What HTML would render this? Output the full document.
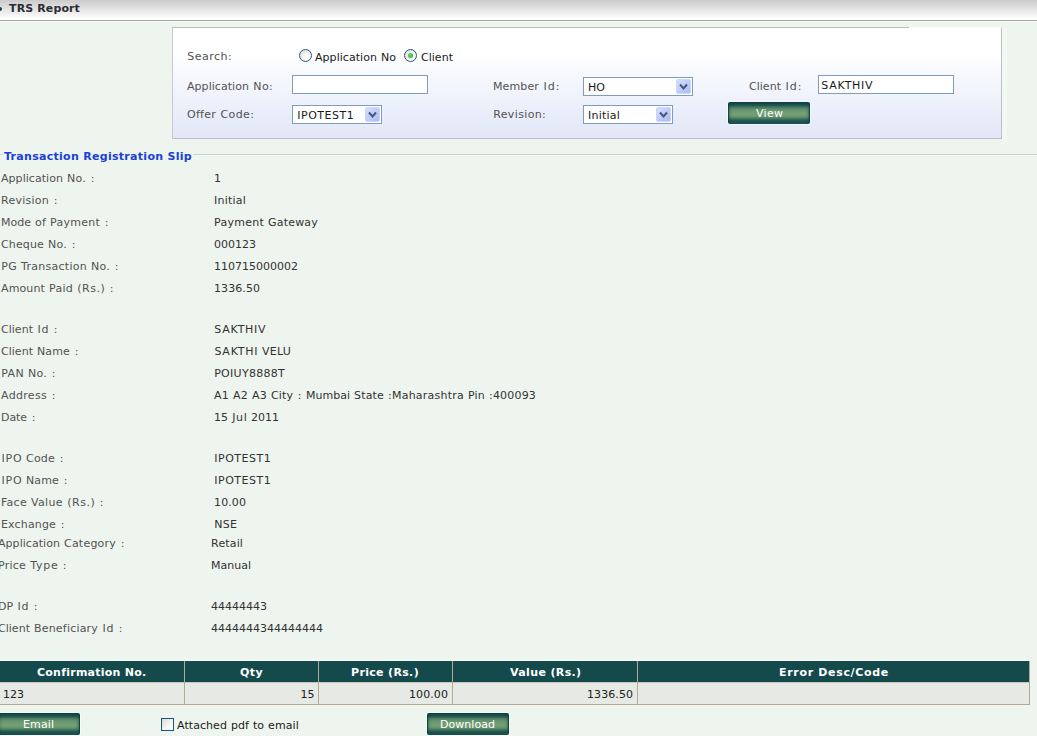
<!DOCTYPE html>
<html>
<head>
<meta charset="utf-8">
<title>TRS Report</title>
<style>
html,body{margin:0;padding:0;}
body{width:1037px;height:736px;overflow:hidden;background:#eef5ee;font-family:"DejaVu Sans","Liberation Sans",sans-serif;font-size:11px;color:#444;position:relative;}
.abs{position:absolute;white-space:pre;line-height:14px;}
.box{position:absolute;box-sizing:border-box;}
#hdr{left:0;top:0;width:1037px;height:20px;background:linear-gradient(#cbcbcb 0,#e6e6e6 50%,#fff 95%);}
#hline{left:0;top:20px;width:1037px;height:2px;background:linear-gradient(#9fa59f 0,#9fa59f 50%,#f7fbf7 50%,#f7fbf7 100%);}
#dot{left:-3px;top:7px;width:5px;height:4px;border-radius:2px;background:#0d4a46;}
.hd{font-weight:bold;color:#2c2c36;}
#panel{left:172px;top:27px;width:830px;height:112px;border:1px solid #bcc1c8;border-left-color:#c6cad2;border-top-color:#fff;background:linear-gradient(#fff 0,#fff 22%,#f1f4fc 58%,#e1e7f8 100%);}
#ptop{left:172px;top:27px;width:737px;height:1px;background:#b9bdb9;}
#pstrip{left:1002px;top:28px;width:5px;height:114px;background:#f2f8f2;}
.lbl{color:#525252;}
.r{color:#525252;}
.v{color:#323232;}
.iv{color:#1a1a1a;}
.inp{border:1px solid #7f9db9;background:#fff;height:19px;}
.sel{border:1px solid #7f9db9;background:#fff;height:19px;}
.sel i{position:absolute;right:1px;top:1px;width:15px;height:15px;border-radius:2px;background:linear-gradient(135deg,#d6e0fb 0,#bccbf7 55%,#aabdf3 100%);border:1px solid #cad6fb;box-sizing:border-box;}
.sel i svg{position:absolute;left:2px;top:3px;}
.radio{width:13px;height:13px;border:1px solid #27568f;border-radius:50%;background:radial-gradient(circle at 62% 62%,#fff 0,#f6f6f2 35%,#d4d4cc 100%);}
.radio.on:after{content:"";position:absolute;left:3px;top:3px;width:5px;height:5px;border-radius:50%;background:radial-gradient(circle at 40% 40%,#6be06b 0,#22a322 90%);}
.btn{height:22px;border-radius:2px;box-shadow:0 0 0 1px rgba(255,255,255,.5);
 background:linear-gradient(90deg,rgba(12,60,60,.9) 0,rgba(12,60,60,.9) 1px,rgba(12,60,60,.22) 1.6px,rgba(12,60,60,.1) 3px,rgba(12,60,60,0) 5px,rgba(12,60,60,0) calc(100% - 5px),rgba(12,60,60,.1) calc(100% - 3px),rgba(12,60,60,.22) calc(100% - 1.6px),rgba(12,60,60,.9) calc(100% - 1px),rgba(12,60,60,.9) 100%),linear-gradient(#0e4040 0,#0e4040 2.3%,#154a48 6.8%,#1c504c 11.4%,#245850 15.9%,#3a6a5a 20.5%,#4a7a62 25%,#588868 29.5%,#62906c 34%,#6a9670 38.6%,#6e9a72 45%,#74a076 54.5%,#709c72 61%,#66946c 66%,#588868 70.5%,#487a60 75%,#346858 79.5%,#245a50 84%,#1e5450 88.6%,#1c524e 93%,#1a4e4c 97.7%);}
.bt{color:#fff;}
#line{left:0;top:154px;width:1037px;height:2px;background:linear-gradient(#d0d1c4 0,#d0d1c4 50%,#f5f9f5 50%,#f5f9f5 100%);}
#legbg{left:3px;top:150px;width:190px;height:10px;background:#eef5ee;}
.leg{font-weight:bold;color:#1a40d8;}
#thl{left:0;top:660px;width:1030px;height:1px;background:#fafcfa;}
#thead{left:0;top:661px;width:1029px;height:21px;background:#144a4c;}
#tmid{left:0;top:682px;width:1029px;height:1px;background:#c9c6ba;}
#trow{left:0;top:683px;width:1029px;height:21px;background:#e6e9e4;}
#tbot{left:0;top:704px;width:1030px;height:1px;background:#b3a994;}
.vd{top:661px;width:1px;height:44px;background:#b3a994;}
.th{font-weight:bold;color:#fff;}
.td{color:#222;}
#cb{left:161px;top:718px;width:13px;height:13px;border:1px solid #1c5180;background:linear-gradient(135deg,#d8d8d0 0,#f4f4f0 55%,#fff 100%);}
</style>
</head>
<body>
<div class="box" id="hdr"></div><div class="box" id="hline"></div><div class="box" id="dot"></div>

<div class="box" id="panel"></div>
<div class="box" id="ptop"></div>
<div class="box" id="pstrip"></div>

<div class="box radio" style="left:299px;top:49px"></div>
<div class="box radio on" style="left:404px;top:49px"></div>

<div class="box inp" style="left:292px;top:75px;width:136px"></div>
<div class="box sel" style="left:583px;top:77px;width:110px"><i><svg width="9" height="8" viewBox="0 0 9 8"><path d="M1 1.5 L4.5 5.5 L8 1.5" fill="none" stroke="#46567a" stroke-width="2"/></svg></i></div>
<div class="box inp" style="left:818px;top:75px;width:136px"></div>
<div class="box sel" style="left:292px;top:105px;width:90px"><i><svg width="9" height="8" viewBox="0 0 9 8"><path d="M1 1.5 L4.5 5.5 L8 1.5" fill="none" stroke="#46567a" stroke-width="2"/></svg></i></div>
<div class="box sel" style="left:583px;top:105px;width:90px"><i><svg width="9" height="8" viewBox="0 0 9 8"><path d="M1 1.5 L4.5 5.5 L8 1.5" fill="none" stroke="#46567a" stroke-width="2"/></svg></i></div>
<div class="box btn" style="left:728px;top:102px;width:82px"></div>

<div class="box" id="line"></div>
<div class="box" id="legbg"></div>

<div class="box" id="thl"></div>
<div class="box" id="thead"></div>
<div class="box" id="tmid"></div>
<div class="box" id="trow"></div>
<div class="box" id="tbot"></div>
<div class="box vd" style="left:184px"></div>
<div class="box vd" style="left:318px"></div>
<div class="box vd" style="left:452px"></div>
<div class="box vd" style="left:637px"></div>
<div class="box vd" style="left:1029px"></div>

<div class="box btn" style="left:-2px;top:713px;width:82px"></div>
<div class="box" id="cb"></div>
<div class="box btn" style="left:427px;top:713px;width:82px"></div>

<span class="abs hd" style="left:9px;top:2px;letter-spacing:.122px">TRS Report</span>
<span class="abs lbl" style="left:187.25px;top:50px;letter-spacing:.5px">Search:</span>
<span class="abs iv" style="left:315px;top:51px;word-spacing:.5px"><span style="letter-spacing:.048px">Application</span> <span style="letter-spacing:.016px">No</span></span>
<span class="abs iv" style="left:421.01px;top:51px;letter-spacing:.023px">Client</span>
<span class="abs lbl" style="left:187px;top:80px;word-spacing:.5px"><span style="letter-spacing:.048px">Application</span> <span style="letter-spacing:.443px;margin:0 -.221px 0 .221px">No:</span></span>
<span class="abs lbl" style="left:493px;top:80px;word-spacing:.5px"><span style="letter-spacing:.125px">Member</span> <span style="letter-spacing:1.021px;margin:0 -.51px 0 .51px">Id:</span></span>
<span class="abs lbl" style="left:749px;top:80px;word-spacing:.5px"><span style="letter-spacing:.023px">Client</span> <span style="letter-spacing:1.021px;margin:0 -.51px 0 .51px">Id:</span></span>
<span class="abs lbl" style="left:187px;top:108px;word-spacing:.5px"><span style="letter-spacing:.294px">Offer</span> <span style="letter-spacing:.425px;margin:0 -.212px 0 .212px">Code:</span></span>
<span class="abs lbl" style="left:493.18px;top:108px;letter-spacing:.368px">Revision:</span>
<span class="abs iv" style="left:588.02px;top:81px;letter-spacing:.031px">HO</span>
<span class="abs iv" style="left:821.37px;top:79px;letter-spacing:.737px">SAKTHIV</span>
<span class="abs iv" style="left:297.26px;top:109px;letter-spacing:.512px">IPOTEST1</span>
<span class="abs iv" style="left:588.11px;top:109px;letter-spacing:.221px">Initial</span>
<span class="abs leg" style="left:4px;top:150px;letter-spacing:.292px">Transaction Registration Slip</span>
<span class="abs r" style="left:1px;top:172px;word-spacing:.5px"><span style="letter-spacing:.048px">Application</span> <span style="letter-spacing:.245px">No.</span> <span style="letter-spacing:1.281px;margin:0 -.641px 0 .641px">:</span></span>
<span class="abs v" style="left:214px;top:172px;letter-spacing:0px">1</span>
<span class="abs r" style="left:1px;top:194px;word-spacing:.5px"><span style="letter-spacing:.252px">Revision</span> <span style="letter-spacing:1.281px;margin:0 -.641px 0 .641px">:</span></span>
<span class="abs v" style="left:214.11px;top:194px;letter-spacing:.221px">Initial</span>
<span class="abs r" style="left:1px;top:216px;word-spacing:.5px"><span style="letter-spacing:.004px">Mode</span> <span style="letter-spacing:.195px">of</span> <span style="letter-spacing:.261px">Payment</span> <span style="letter-spacing:1.281px;margin:0 -.641px 0 .641px">:</span></span>
<span class="abs v" style="left:214px;top:216px;word-spacing:.5px"><span style="letter-spacing:.261px">Payment</span> <span style="letter-spacing:.201px">Gateway</span></span>
<span class="abs r" style="left:1px;top:238px;word-spacing:.5px"><span style="letter-spacing:.141px">Cheque</span> <span style="letter-spacing:.245px">No.</span> <span style="letter-spacing:1.281px;margin:0 -.641px 0 .641px">:</span></span>
<span class="abs v" style="left:214px;top:238px;letter-spacing:0px">000123</span>
<span class="abs r" style="left:1px;top:260px;word-spacing:.5px"><span style="letter-spacing:.414px;margin:0 -.207px 0 .207px">PG</span> <span style="letter-spacing:.278px">Transaction</span> <span style="letter-spacing:.245px">No.</span> <span style="letter-spacing:1.281px;margin:0 -.641px 0 .641px">:</span></span>
<span class="abs v" style="left:214px;top:260px;letter-spacing:.001px">110715000002</span>
<span class="abs r" style="left:1px;top:282px;word-spacing:.5px"><span style="letter-spacing:.128px">Amount</span> <span style="letter-spacing:.27px">Paid</span> <span style="letter-spacing:.506px;margin:0 -.253px 0 .253px">(Rs.)</span> <span style="letter-spacing:1.281px;margin:0 -.641px 0 .641px">:</span></span>
<span class="abs v" style="left:214.04px;top:282px;letter-spacing:.071px">1336.50</span>
<span class="abs r" style="left:1px;top:323px;word-spacing:.5px"><span style="letter-spacing:.023px">Client</span> <span style="letter-spacing:.883px;margin:0 -.441px 0 .441px">Id</span> <span style="letter-spacing:1.281px;margin:0 -.641px 0 .641px">:</span></span>
<span class="abs v" style="left:214.37px;top:323px;letter-spacing:.737px">SAKTHIV</span>
<span class="abs r" style="left:1px;top:345px;word-spacing:.5px"><span style="letter-spacing:.023px">Client</span> <span style="letter-spacing:.137px">Name</span> <span style="letter-spacing:1.281px;margin:0 -.641px 0 .641px">:</span></span>
<span class="abs v" style="left:214px;top:345px;word-spacing:.5px"><span style="letter-spacing:.781px;margin:0 -.391px 0 .391px">SAKTHI</span> <span style="letter-spacing:.223px">VELU</span></span>
<span class="abs r" style="left:1px;top:367px;word-spacing:.5px"><span style="letter-spacing:.438px;margin:0 -.219px 0 .219px">PAN</span> <span style="letter-spacing:.245px">No.</span> <span style="letter-spacing:1.281px;margin:0 -.641px 0 .641px">:</span></span>
<span class="abs v" style="left:214.15px;top:367px;letter-spacing:.297px">POIUY8888T</span>
<span class="abs r" style="left:1px;top:389px;word-spacing:.5px"><span style="letter-spacing:.312px">Address</span> <span style="letter-spacing:1.281px;margin:0 -.641px 0 .641px">:</span></span>
<span class="abs v" style="left:214px;top:389px;word-spacing:.5px"><span style="letter-spacing:.234px">A1</span> <span style="letter-spacing:.234px">A2</span> <span style="letter-spacing:.234px">A3</span> <span style="letter-spacing:.109px">City</span> <span style="letter-spacing:1.281px;margin:0 -.641px 0 .641px">:</span> <span style="letter-spacing:.005px">Mumbai</span> <span style="letter-spacing:.175px">State</span> <span style="letter-spacing:.233px">:Maharashtra</span> <span style="letter-spacing:.193px">Pin</span> <span style="letter-spacing:.185px">:400093</span></span>
<span class="abs r" style="left:1px;top:411px;word-spacing:.5px"><span style="letter-spacing:-.074px">Date</span> <span style="letter-spacing:1.281px;margin:0 -.641px 0 .641px">:</span></span>
<span class="abs v" style="left:214px;top:411px;word-spacing:.5px"><span style="letter-spacing:0px">15</span> <span style="letter-spacing:.573px;margin:0 -.286px 0 .286px">Jul</span> <span style="letter-spacing:0px">2011</span></span>
<span class="abs r" style="left:1px;top:452px;word-spacing:.5px"><span style="letter-spacing:.818px;margin:0 -.409px 0 .409px">IPO</span> <span style="letter-spacing:.207px">Code</span> <span style="letter-spacing:1.281px;margin:0 -.641px 0 .641px">:</span></span>
<span class="abs v" style="left:214.26px;top:452px;letter-spacing:.512px">IPOTEST1</span>
<span class="abs r" style="left:1px;top:474px;word-spacing:.5px"><span style="letter-spacing:.818px;margin:0 -.409px 0 .409px">IPO</span> <span style="letter-spacing:.137px">Name</span> <span style="letter-spacing:1.281px;margin:0 -.641px 0 .641px">:</span></span>
<span class="abs v" style="left:214.26px;top:474px;letter-spacing:.512px">IPOTEST1</span>
<span class="abs r" style="left:1px;top:496px;word-spacing:.5px"><span style="letter-spacing:.281px">Face</span> <span style="letter-spacing:.356px">Value</span> <span style="letter-spacing:.506px;margin:0 -.253px 0 .253px">(Rs.)</span> <span style="letter-spacing:1.281px;margin:0 -.641px 0 .641px">:</span></span>
<span class="abs v" style="left:214.05px;top:496px;letter-spacing:.1px">10.00</span>
<span class="abs r" style="left:1px;top:518px;word-spacing:.5px"><span style="letter-spacing:.156px">Exchange</span> <span style="letter-spacing:1.281px;margin:0 -.641px 0 .641px">:</span></span>
<span class="abs v" style="left:214.14px;top:518px;letter-spacing:.276px">NSE</span>
<span class="abs r" style="left:-2px;top:537px;word-spacing:.5px"><span style="letter-spacing:.048px">Application</span> <span style="letter-spacing:.219px">Category</span> <span style="letter-spacing:1.281px;margin:0 -.641px 0 .641px">:</span></span>
<span class="abs v" style="left:211.08px;top:537px;letter-spacing:.151px">Retail</span>
<span class="abs r" style="left:-2px;top:559px;word-spacing:.5px"><span style="letter-spacing:.231px">Price</span> <span style="letter-spacing:.684px;margin:0 -.342px 0 .342px">Type</span> <span style="letter-spacing:1.281px;margin:0 -.641px 0 .641px">:</span></span>
<span class="abs v" style="left:211px;top:559px;letter-spacing:.003px">Manual</span>
<span class="abs r" style="left:-2px;top:600px;word-spacing:.5px"><span style="letter-spacing:-.055px">DP</span> <span style="letter-spacing:.883px;margin:0 -.441px 0 .441px">Id</span> <span style="letter-spacing:1.281px;margin:0 -.641px 0 .641px">:</span></span>
<span class="abs v" style="left:211px;top:600px;letter-spacing:0px">44444443</span>
<span class="abs r" style="left:-2px;top:622px;word-spacing:.5px"><span style="letter-spacing:.023px">Client</span> <span style="letter-spacing:.195px">Beneficiary</span> <span style="letter-spacing:.883px;margin:0 -.441px 0 .441px">Id</span> <span style="letter-spacing:1.281px;margin:0 -.641px 0 .641px">:</span></span>
<span class="abs v" style="left:211px;top:622px;letter-spacing:.001px">4444444344444444</span>
<span class="abs th" style="left:37px;top:666px;letter-spacing:.242px">Confirmation No.</span>
<span class="abs th" style="left:240px;top:666px;letter-spacing:.406px">Qty</span>
<span class="abs th" style="left:351px;top:666px;letter-spacing:.334px">Price (Rs.)</span>
<span class="abs th" style="left:510px;top:666px;letter-spacing:.365px">Value (Rs.)</span>
<span class="abs th" style="left:779px;top:666px;letter-spacing:.678px">Error Desc/Code</span>
<span class="abs td" style="left:3px;top:688px;letter-spacing:0px">123</span>
<span class="abs td" style="left:300.5px;top:688px;letter-spacing:0px">15</span>
<span class="abs td" style="left:409.04px;top:688px;letter-spacing:.083px">100.00</span>
<span class="abs td" style="left:587.04px;top:688px;letter-spacing:.071px">1336.50</span>
<span class="abs bt" style="left:23.05px;top:718px;letter-spacing:.094px">Email</span>
<span class="abs iv" style="left:177px;top:719px;word-spacing:.5px"><span style="letter-spacing:.066px">Attached</span> <span style="letter-spacing:.052px">pdf</span> <span style="letter-spacing:-.023px">to</span> <span style="letter-spacing:.131px">email</span></span>
<span class="abs bt" style="left:440.02px;top:718px;letter-spacing:.039px">Download</span>
<span class="abs bt" style="left:756.11px;top:107px;letter-spacing:.223px">View</span>
</body>
</html>
